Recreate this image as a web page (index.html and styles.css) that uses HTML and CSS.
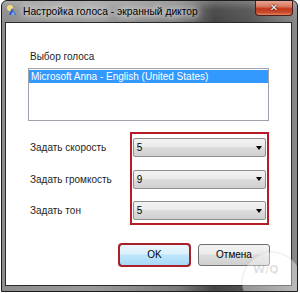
FILE: index.html
```html
<!DOCTYPE html>
<html lang="ru">
<head>
<meta charset="utf-8">
<title>Настройка голоса</title>
<link rel="stylesheet" href="styles.css">
</head>
<body>
<div class="window">
  <div class="titlebar">
    <svg class="app-icon" width="11" height="11" viewBox="0 0 11 11">
      <circle cx="3" cy="3" r="3" fill="#ffe680" opacity="0.9"/>
      <path d="M2 10 L5 3 L9 10 Z" fill="#2a56c6"/>
      <path d="M4 10 L6 6 L8 10 Z" fill="#7fa8f0"/>
    </svg>
    <span class="title">Настройка голоса - экранный диктор</span>
    <div class="close"><span class="close-x">✕</span></div>
  </div>
  <div class="client">
    <div class="label first">Выбор голоса</div>
    <div class="listbox">
      <div class="item selected">Microsoft Anna - English (United States)</div>
    </div>
    <div class="settings">
      <div class="labels">
        <div class="row-label">Задать скорость</div>
        <div class="row-label">Задать громкость</div>
        <div class="row-label">Задать тон</div>
      </div>
      <div class="redbox">
        <div class="combo"><span class="val">5</span><span class="arrow"></span></div>
        <div class="combo"><span class="val">9</span><span class="arrow"></span></div>
        <div class="combo"><span class="val">5</span><span class="arrow"></span></div>
      </div>
    </div>
    <div class="buttons">
      <div class="btn ok">OK</div>
      <div class="btn">Отмена</div>
    </div>
    <div class="watermark"><span class="wm-text">W/Q</span></div>
  </div>
</div>
</body>
</html>
```

FILE: styles.css
```css
html, body {
  margin: 0;
  padding: 0;
  background: #ffffff;
}
body {
  width: 300px;
  height: 293px;
  overflow: hidden;
  font-family: "Liberation Sans", Arial, sans-serif;
  font-size: 10px;
}
.window {
  margin-left: 1px;
  width: 297px;
  height: 292px;
  box-sizing: border-box;
  border: 1px solid #1c1c1c;
  border-radius: 6px 6px 0 0;
  background: linear-gradient(90deg, #8d8d8d 0%, #9a9a9a 30%, #7a7a7a 60%, #454545 72%, #555555 84%, #8a8a8a 100%);
  display: flex;
  flex-direction: column;
  overflow: hidden;
}
.titlebar {
  height: 21px;
  flex: none;
  display: flex;
  align-items: flex-start;
  padding-left: 5px;
  background: linear-gradient(180deg, rgba(255,255,255,0.25) 0%, rgba(255,255,255,0.05) 40%, rgba(0,0,0,0) 100%);
}
.app-icon {
  margin-top: 4px;
  flex: none;
}
.title {
  margin-left: 5px;
  margin-top: 4px;
  font-size: 10.25px;
  line-height: 14px;
  color: #000;
  white-space: nowrap;
  text-shadow: 0 0 6px #fff, 0 0 10px #fff, 0 0 14px rgba(255,255,255,0.8);
}
.close {
  margin-left: auto;
  margin-right: 4px;
  width: 38px;
  height: 15px;
  box-sizing: border-box;
  border: 1px solid #4a2018;
  border-top: none;
  border-radius: 0 0 4px 4px;
  background: linear-gradient(180deg, #e9a593 0%, #d7775f 40%, #c2381c 55%, #c8472b 80%, #e2825e 100%);
  display: flex;
  align-items: center;
  justify-content: center;
}
.close-x {
  font-family: "DejaVu Sans", sans-serif;
  font-size: 10px;
  font-weight: bold;
  line-height: 10px;
  color: #fff;
  text-shadow: 0 0 1px #3a1008, 0 0 2px #3a1008;
}
.client {
  position: relative;
  margin: 0 5px 5px 3px;
  flex: 1;
  box-sizing: border-box;
  border: 1px solid #2a2a2a;
  background: #ffffff;
  padding: 26px 22px 0 22px;
  color: #1e1e1e;
}
.label {
  line-height: 15px;
  margin-left: 2px;
}
.listbox {
  margin-top: 4px;
  height: 53px;
  box-sizing: border-box;
  border: 1px solid #9ea3ab;
  background: #fff;
}
.item {
  height: 13px;
  line-height: 13px;
  margin: 1px 0 0 0;
  padding-left: 2px;
  white-space: nowrap;
}
.item.selected {
  background: #3399ff;
  color: #fff;
}
.settings {
  margin-top: 11px;
  display: flex;
}
.labels {
  width: 103px;
  box-sizing: border-box;
  padding: 6px 0 0 2px;
  display: flex;
  flex-direction: column;
  gap: 12.5px;
}
.row-label {
  height: 19px;
  line-height: 19px;
  white-space: nowrap;
}
.redbox {
  width: 141px;
  box-sizing: border-box;
  border: 2px solid #b51c26;
  padding: 4px 1px 3px 1px;
  display: flex;
  flex-direction: column;
  gap: 12.5px;
}
.combo {
  height: 19px;
  box-sizing: border-box;
  border: 1px solid #8e8f8f;
  border-radius: 2px;
  background: linear-gradient(180deg, #f2f2f2 0%, #ebebeb 45%, #dddddd 50%, #cfcfcf 100%);
  display: flex;
  align-items: center;
  padding: 0 3px 0 3px;
}
.val {
  line-height: 17px;
  color: #000;
}
.arrow {
  margin-left: auto;
  width: 0;
  height: 0;
  border-left: 3.5px solid transparent;
  border-right: 3.5px solid transparent;
  border-top: 4px solid #000;
}
.buttons {
  margin-top: 19px;
  margin-right: -1px;
  display: flex;
  justify-content: flex-end;
  gap: 8px;
}
.btn {
  width: 72px;
  height: 22px;
  box-sizing: border-box;
  border: 1px solid #707070;
  border-radius: 3px;
  background: linear-gradient(180deg, #f2f2f2 0%, #ebebeb 45%, #dddddd 50%, #cfcfcf 100%);
  text-align: center;
  line-height: 20px;
  color: #000;
}
.btn.ok {
  width: 71px;
  border-color: #3c7fb1;
  background: linear-gradient(180deg, #eaf6fd 0%, #d9f0fc 45%, #bee6fd 50%, #a7d9f5 100%);
  outline: 2px solid #a8202a;
  outline-offset: -1px;
}
.watermark {
  position: absolute;
  left: 236px;
  top: 229px;
  width: 58px;
  height: 58px;
  border-radius: 50%;
  border: 1px solid rgba(0,0,0,0.06);
  background: rgba(255,255,255,0.4);
  box-shadow: 0 0 3px rgba(0,0,0,0.08);
  pointer-events: none;
}
.wm-text {
  position: absolute;
  left: 10px;
  top: 10px;
  font-family: "DejaVu Sans", sans-serif;
  font-size: 11px;
  font-weight: bold;
  color: rgba(0,0,0,0.13);
}
```
